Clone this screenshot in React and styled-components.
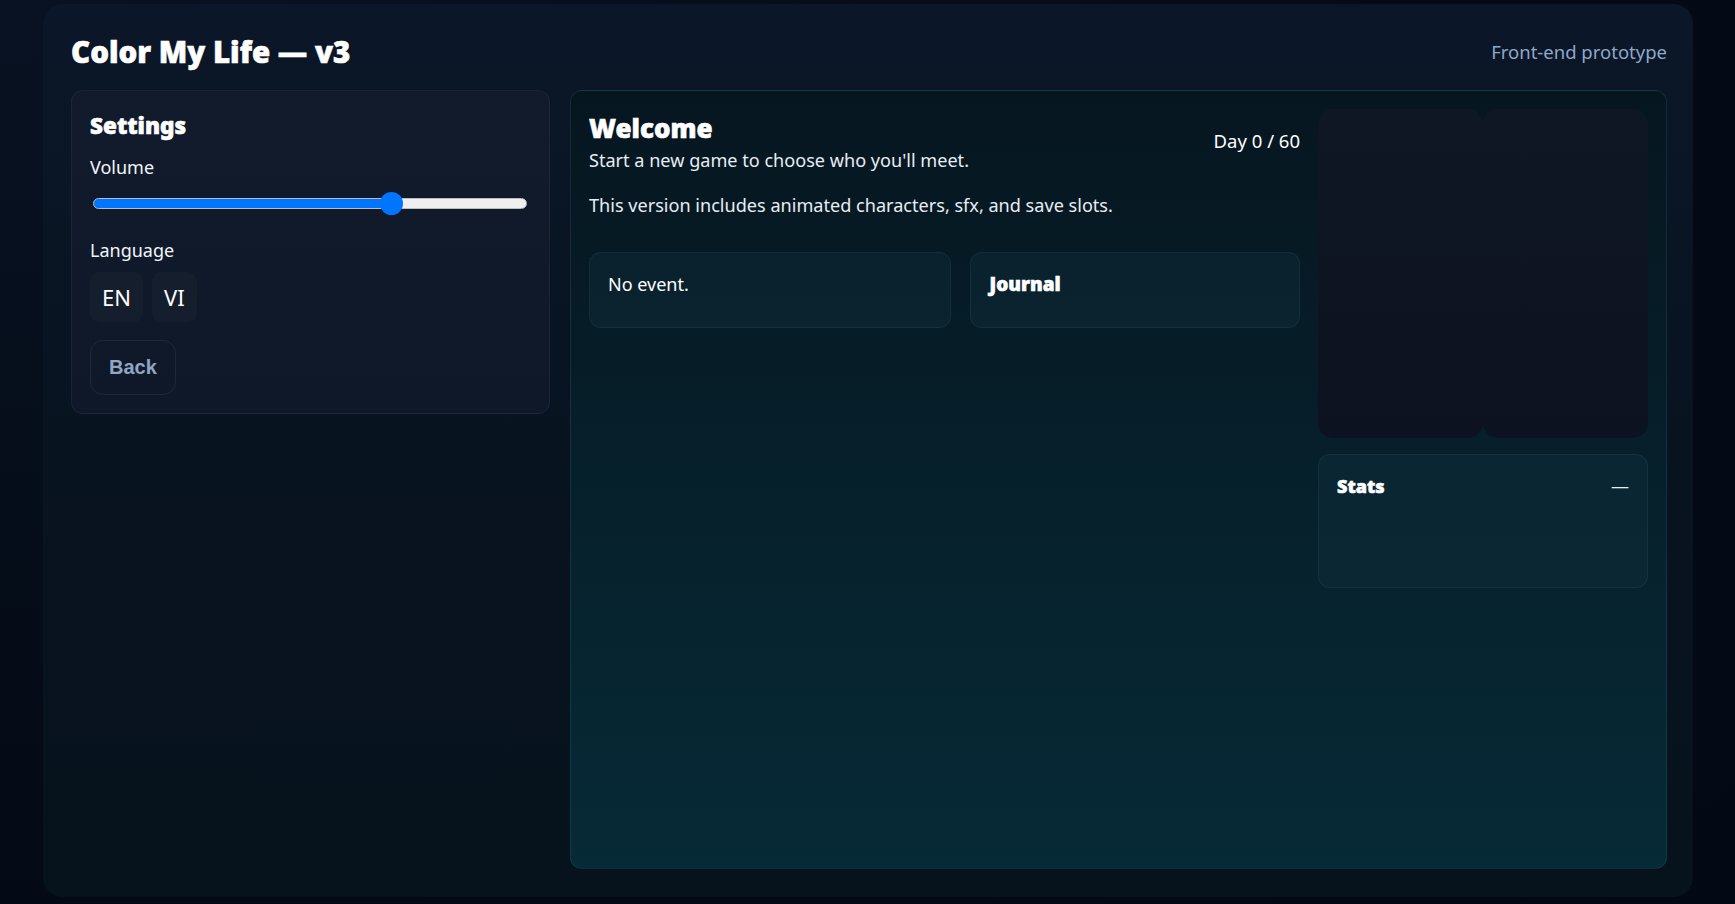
import React, { useState } from 'react';
import styled, { createGlobalStyle } from 'styled-components';

const GlobalStyle = createGlobalStyle`
  * {
    box-sizing: border-box;
  }

  body {
    margin: 0;
    background: radial-gradient(ellipse at 0% 0%, #081222 0%, #040b16 60%, #030914 100%);
    color: #e6edf3;
    font-family: 'Noto Sans', 'Open Sans', sans-serif;
    min-height: 100vh;
  }
`;

const heavy = `
  font-family: 'Noto Sans', 'Open Sans', sans-serif;
  font-weight: 900;
  -webkit-text-stroke: 0.6px currentColor;
`;

const Shell = styled.div`
  width: 1650px;
  height: 893px;
  margin: 4px 0 0 43px;
  padding: 28px 26px 28px 28px;
  border-radius: 20px;
  background: linear-gradient(180deg, #0b1628 0%, #08131f 60%, #06121c 100%);
  display: flex;
  flex-direction: column;
`;

const Header = styled.header`
  height: 38px;
  margin-bottom: 20px;
  display: flex;
  align-items: center;
  justify-content: space-between;
`;

const Title = styled.h1`
  margin: 0;
  ${heavy};
  font-size: 29.5px;
  color: #ffffff;
`;

const Tagline = styled.span`
  font-size: 18.5px;
  color: #8ea8c8;
`;

const Layout = styled.main`
  flex: 1;
  display: grid;
  grid-template-columns: 479px 1fr;
  gap: 20px;
  min-height: 0;
`;

const Card = styled.section`
  align-self: start;
  padding: 18px;
  border-radius: 12px;
  border: 1px solid rgba(255, 255, 255, 0.05);
  background: linear-gradient(180deg, #111b2c 0%, #0e1828 100%);
`;

const CardTitle = styled.h2`
  margin: 4px 0 0;
  ${heavy};
  font-size: 22.5px;
  line-height: 26px;
  color: #ffffff;
`;

const FieldLabel = styled.div`
  margin-top: ${({ $gap }) => $gap}px;
  font-size: 18px;
  line-height: 26px;
  color: #f1f5f9;
`;

const Slider = styled.input`
  display: block;
  width: 434px;
  height: 23px;
  margin: 12px 0 0 3px;
  appearance: none;
  background: transparent;

  &::-webkit-slider-runnable-track {
    height: 11px;
    border-radius: 6px;
    border: 1px solid #b9bcc2;
    background: linear-gradient(
      90deg,
      #0075ff 0%,
      #0075ff ${({ $fill }) => $fill}%,
      #efefef ${({ $fill }) => $fill}%,
      #efefef 100%
    );
  }

  &::-webkit-slider-thumb {
    appearance: none;
    width: 23px;
    height: 23px;
    margin-top: -7px;
    border-radius: 50%;
    background: #0075ff;
    border: none;
  }
`;

const LangRow = styled.div`
  display: flex;
  gap: 9px;
  margin-top: 9px;
`;

const LangButton = styled.button`
  height: 50px;
  padding: 0 12px;
  border: none;
  border-radius: 9px;
  background: #141e2c;
  color: #ffffff;
  font-family: 'Noto Sans', sans-serif;
  font-size: 22px;
  cursor: pointer;
`;

const BackButton = styled.button`
  display: block;
  margin-top: 18px;
  padding: 15px 18px;
  border: 1px solid rgba(255, 255, 255, 0.07);
  border-radius: 13px;
  background: transparent;
  color: #91a6c2;
  font-family: 'Liberation Sans', Arial, sans-serif;
  font-size: 20px;
  font-weight: 700;
  cursor: pointer;
`;

const Stage = styled.section`
  display: grid;
  grid-template-columns: 1fr 330px;
  gap: 18px;
  align-items: start;
  padding: 18px;
  border-radius: 12px;
  border: 1px solid rgba(60, 120, 140, 0.22);
  background: linear-gradient(180deg, #061620 0%, #06202b 50%, #062a36 100%);
`;

const Story = styled.div`
  display: flex;
  flex-direction: column;
`;

const StoryHead = styled.div`
  display: flex;
  align-items: center;
  justify-content: space-between;
`;

const SceneTitle = styled.h2`
  margin: 4px 0 0;
  ${heavy};
  font-size: 26px;
  line-height: 30px;
  color: #ffffff;
`;

const Text = styled.p`
  margin: ${({ $top }) => $top}px 0 0;
  font-size: 18.1px;
  line-height: 26px;
  color: #e6edf3;
`;

const DayCounter = styled.span`
  font-size: 18.5px;
  line-height: 26px;
  color: #ffffff;
`;

const EventGrid = styled.div`
  display: grid;
  grid-template-columns: 363fr 330fr;
  gap: 19px;
  margin-top: 34px;
`;

const Panel = styled.div`
  min-height: ${({ $minHeight }) => $minHeight || 76}px;
  padding: 18px;
  border-radius: 12px;
  border: 1px solid rgba(255, 255, 255, 0.05);
  background: ${({ $tone }) => $tone || 'rgba(20, 50, 62, 0.35)'};
`;

const PanelText = styled.div`
  font-size: 18px;
  line-height: 26px;
  color: #ffffff;
  display: flex;
  justify-content: space-between;
  align-items: center;
`;

const PanelHeading = styled.h3`
  margin: 0;
  ${heavy};
  font-size: ${({ $size }) => $size}px;
  line-height: 26px;
  color: #ffffff;
`;

const Side = styled.aside`
  display: flex;
  flex-direction: column;
  gap: 16px;
`;

const Portraits = styled.div`
  height: 329px;
  display: grid;
  grid-template-columns: 1fr 1fr;
`;

const Portrait = styled.div`
  border-radius: 15px;
  background: linear-gradient(180deg, #0f1624 0%, #0c1220 100%);
`;

const Dash = styled.span`
  font-weight: 400;
  color: #e6edf3;
`;

export default function App() {
  const [volume, setVolume] = useState(70);
  const [lang, setLang] = useState('EN');

  return (
    <>
      <GlobalStyle />
      <Shell>
        <Header>
          <Title>Color My Life — v3</Title>
          <Tagline>Front-end prototype</Tagline>
        </Header>

        <Layout>
          <Card>
            <CardTitle>Settings</CardTitle>
            <FieldLabel $gap={15}>Volume</FieldLabel>
            <Slider
              type="range"
              min="0"
              max="100"
              value={volume}
              $fill={volume}
              onChange={e => setVolume(Number(e.target.value))}
            />
            <FieldLabel $gap={22}>Language</FieldLabel>
            <LangRow>
              {['EN', 'VI'].map(code => (
                <LangButton key={code} onClick={() => setLang(code)} aria-pressed={lang === code}>
                  {code}
                </LangButton>
              ))}
            </LangRow>
            <BackButton>Back</BackButton>
          </Card>

          <Stage>
            <Story>
              <StoryHead>
                <div>
                  <SceneTitle>Welcome</SceneTitle>
                  <Text $top={4}>Start a new game to choose who you'll meet.</Text>
                </div>
                <DayCounter>Day 0 / 60</DayCounter>
              </StoryHead>
              <Text $top={19}>This version includes animated characters, sfx, and save slots.</Text>

              <EventGrid>
                <Panel>
                  <PanelText>No event.</PanelText>
                </Panel>
                <Panel>
                  <PanelHeading $size={19}>Journal</PanelHeading>
                </Panel>
              </EventGrid>
            </Story>

            <Side>
              <Portraits>
                <Portrait />
                <Portrait />
              </Portraits>
              <Panel $minHeight={134} $tone="rgba(14, 44, 56, 0.55)">
                <PanelText>
                  <PanelHeading $size={18}>Stats</PanelHeading>
                  <Dash>—</Dash>
                </PanelText>
              </Panel>
            </Side>
          </Stage>
        </Layout>
      </Shell>
    </>
  );
}
